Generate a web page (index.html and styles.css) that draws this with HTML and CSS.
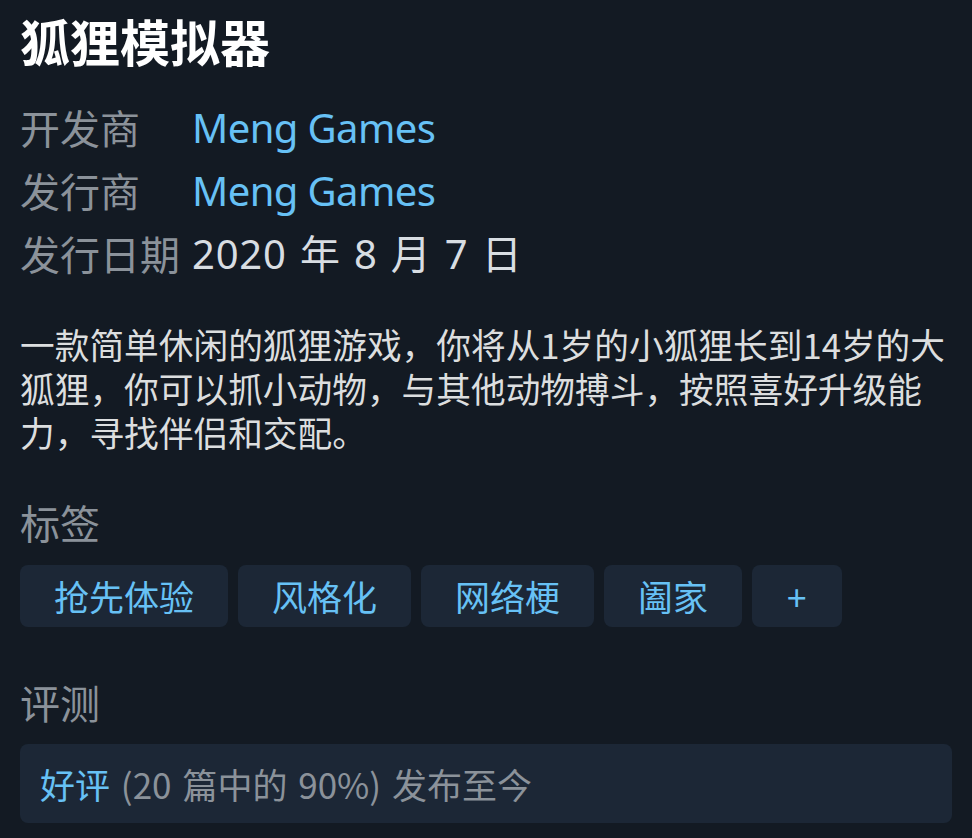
FILE: index.html
```html
<!DOCTYPE html>
<html lang="zh-CN">
<head>
<meta charset="utf-8">
<title>狐狸模拟器</title>
<link rel="stylesheet" href="styles.css">
</head>
<body>
<main class="page">
  <h1 class="title">狐狸模拟器</h1>
  <dl class="info">
    <dt class="info-label">开发商</dt>
    <dd class="info-value link">Meng Games</dd>
    <dt class="info-label">发行商</dt>
    <dd class="info-value link">Meng Games</dd>
    <dt class="info-label">发行日期</dt>
    <dd class="info-value date">2020 年 8 月 7 日</dd>
  </dl>
  <p class="desc">一款简单休闲的狐狸游戏，你将从1岁的小狐狸长到14岁的大狐狸，你可以抓小动物，与其他动物搏斗，按照喜好升级能力，寻找伴侣和交配。</p>
  <h2 class="section-title">标签</h2>
  <div class="tags">
    <span class="tag">抢先体验</span>
    <span class="tag">风格化</span>
    <span class="tag">网络梗</span>
    <span class="tag">阖家</span>
    <span class="tag tag-more">+</span>
  </div>
  <h2 class="section-title section-title-review">评测</h2>
  <div class="review">
    <span class="review-rating">好评</span> (20 篇中的 90%) 发布至今
  </div>
</main>
</body>
</html>
```
FILE: styles.css
```css
html, body {
  margin: 0;
  padding: 0;
  background: #131a23;
}

body {
  font-family: "Noto Sans", "Noto Sans CJK SC", sans-serif;
  color: #d8dde2;
}

.page {
  padding: 6px 20px 0 20px;
}

.title {
  margin: 0;
  font-family: "Noto Sans CJK SC", sans-serif;
  font-size: 50px;
  font-weight: 700;
  line-height: 68px;
  color: #ffffff;
}

.info {
  margin: 22px 0 0 0;
  display: grid;
  grid-template-columns: auto 1fr;
  column-gap: 12px;
  row-gap: 0;
}

.info-label,
.info-value {
  margin: 0;
  font-size: 40px;
  line-height: 63px;
}

.info-label {
  font-family: "Noto Sans CJK SC", sans-serif;
  color: #8b929a;
}

.info-value {
  font-family: "Noto Sans", "Noto Sans CJK SC", sans-serif;
  color: #d8dde2;
}

.link {
  color: #67c1f5;
  letter-spacing: -0.6px;
}

.date {
  letter-spacing: 0.8px;
  word-spacing: 2px;
}

.desc {
  margin: 37px 0 0 0;
  font-family: "Noto Sans CJK SC", sans-serif;
  font-size: 34.7px;
  line-height: 44px;
  color: #dcdedf;
}

.section-title {
  margin: 40px 0 0 0;
  font-family: "Noto Sans CJK SC", sans-serif;
  font-size: 40px;
  font-weight: 400;
  line-height: 56px;
  color: #8b929a;
}

.section-title-review {
  margin-top: 47px;
}

.tags {
  margin-top: 15px;
  display: flex;
  gap: 10px;
}

.tag {
  display: block;
  padding: 0 34px;
  height: 62px;
  line-height: 62px;
  border-radius: 8px;
  background: #1c2736;
  color: #67c1f5;
  font-family: "Noto Sans CJK SC", sans-serif;
  font-size: 35px;
}

.tag-more {
  padding: 0 35px;
}

.review {
  margin-top: 14px;
  padding: 17px 20px;
  border-radius: 8px;
  background: #1c2736;
  font-family: "Noto Sans CJK SC", sans-serif;
  font-size: 35px;
  line-height: 45px;
  word-spacing: 3px;
  color: #8b929a;
}

.review-rating {
  color: #67c1f5;
}
```
